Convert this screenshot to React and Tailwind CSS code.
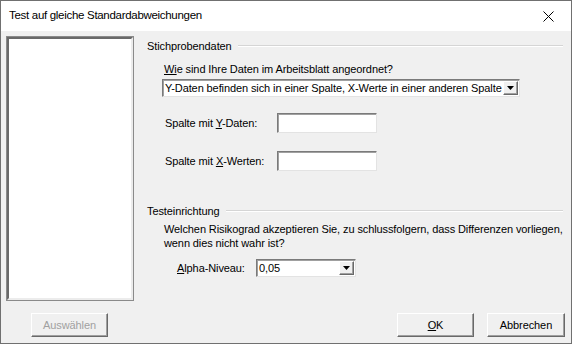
import React from 'react';

const sunken =
  'border border-t-[#7a7a7a] border-l-[#7a7a7a] border-b-[#e3e3e3] border-r-[#e3e3e3] bg-white shadow-[inset_1px_1px_0_#a0a0a0]';

const raised =
  'border border-t-white border-l-white border-b-[#696969] border-r-[#696969] bg-[#f0f0f0] shadow-[inset_-1px_-1px_0_#a0a0a0]';

const Arrow = () => (
  <svg width="7" height="4" viewBox="0 0 7 4">
    <path d="M0 0h7L3.5 4z" fill="#000" />
  </svg>
);

const Combo = ({ width, value }) => (
  <div className={`flex h-[18px] items-center ${sunken} ${width}`}>
    <span className="flex-1 pl-[2px] leading-[14px] whitespace-nowrap overflow-hidden">{value}</span>
    <div className={`mr-[1px] flex h-[14px] w-[15px] items-center justify-center ${raised}`}>
      <Arrow />
    </div>
  </div>
);

const GroupHeader = ({ title }) => (
  <div className="flex h-[18px] items-center">
    <span className="leading-[14px]">{title}</span>
    <div className="ml-[6px] mr-[8px] flex-1 border-t border-b border-t-[#d5d5d5] border-b-white" />
  </div>
);

const Button = ({ children, disabled, className = '' }) => (
  <button
    className={`h-[24px] w-[77px] leading-[14px] ${raised} ${disabled ? 'text-[#a0a0a0]' : 'text-black'} ${className}`}
  >
    {children}
  </button>
);

export default function App() {
  return (
    <div
      className="flex h-[344px] w-[572px] flex-col border border-[#707070] text-[11px] tracking-[-0.1px] text-black"
      style={{ fontFamily: '"Liberation Sans", Arial, sans-serif' }}
    >
      {/* Title bar */}
      <div className="flex h-[30px] items-center justify-between bg-white pl-[8px] pr-[17px]">
        <span className="text-[11.5px] tracking-[-0.3px]">
          Test auf gleiche Standardabweichungen
        </span>
        <svg width="11" height="11" viewBox="0 0 11 11">
          <path d="M0.5 0.5l10 10M10.5 0.5l-10 10" stroke="#000" strokeWidth="1" />
        </svg>
      </div>

      {/* Body */}
      <div className="flex flex-1 flex-col bg-[#f0f0f0]">
        <div className="flex items-start pt-[6px]">
          <div className="ml-[6px] h-[263px] w-[126px] border-2 border-t-[#696969] border-l-[#696969] border-b-[#ececec] border-r-[#ececec] bg-white outline outline-1 outline-[#8a8a8a]" />

          <div className="ml-[14px] flex flex-1 flex-col">
            <GroupHeader title="Stichprobendaten" />
            <div className="mt-[7px] pl-[17px] leading-[14px]">
              <span className="underline">Wi</span>e sind Ihre Daten im Arbeitsblatt angeordnet?
            </div>
            <div className="mt-[3px] pl-[15px]">
              <Combo
                width="w-[358px]"
                value="Y-Daten befinden sich in einer Spalte, X-Werte in einer anderen Spalte"
              />
            </div>

            <div className="mt-[16px] flex items-center pl-[18px]">
              <span className="w-[112px] leading-[14px]">
                Spalte mit <span className="underline">Y</span>-Daten:
              </span>
              <div className={`h-[20px] w-[100px] ${sunken}`} />
            </div>
            <div className="mt-[18px] flex items-center pl-[18px]">
              <span className="w-[112px] leading-[14px]">
                Spalte mit <span className="underline">X</span>-Werten:
              </span>
              <div className={`h-[20px] w-[100px] ${sunken}`} />
            </div>

            <div className="mt-[31px]">
              <GroupHeader title="Testeinrichtung" />
            </div>
            <div className="mt-[2px] pl-[17px] leading-[14px]">
              Welchen Risikograd akzeptieren Sie, zu schlussfolgern, dass Differenzen vorliegen,
              <br />
              wenn dies nicht wahr ist?
            </div>
            <div className="mt-[9px] flex items-center pl-[30px]">
              <span className="w-[79px] leading-[14px]">
                <span className="underline">A</span>lpha-Niveau:
              </span>
              <Combo width="w-[100px]" value="0,05" />
            </div>
          </div>
        </div>

        <div className="mt-[13px] flex items-center">
          <Button disabled className="ml-[30px]">Auswählen</Button>
          <Button className="ml-[289px]">
            <span className="underline">O</span>K
          </Button>
          <Button className="ml-[13px] w-[78px]">Abbrechen</Button>
        </div>
      </div>
    </div>
  );
}
